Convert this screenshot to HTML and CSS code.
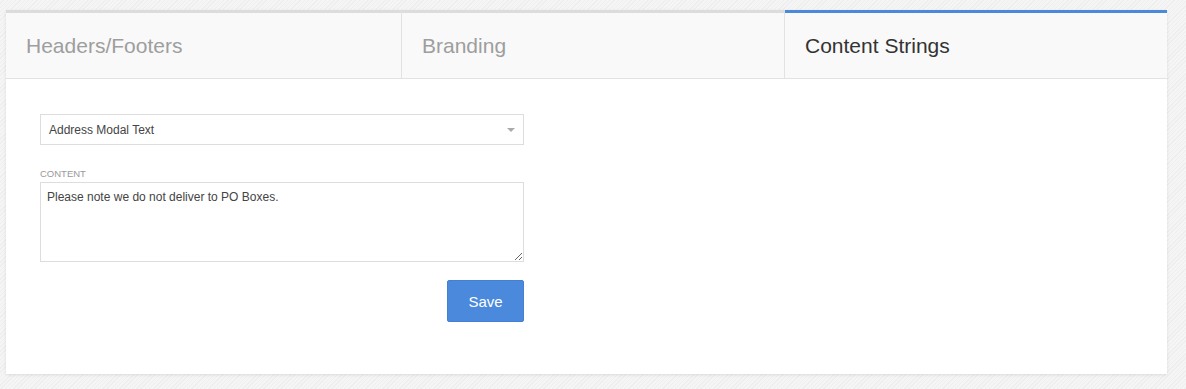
FILE: index.html
```html
<!DOCTYPE html>
<html lang="en">
<head>
  <meta charset="UTF-8">
  <title>Content Strings</title>
  <link rel="stylesheet" href="styles.css">
</head>
<body>
  <div class="panel">
    <div class="tabs">
      <div class="tab">Headers/Footers</div>
      <div class="tab">Branding</div>
      <div class="tab active">Content Strings</div>
    </div>
    <div class="body">
      <form class="form">
        <div class="select">
          <span>Address Modal Text</span>
          <i class="caret"></i>
        </div>
        <label class="label" for="content">Content</label>
        <textarea id="content" class="content">Please note we do not deliver to PO Boxes.</textarea>
        <p class="actions">
          <button type="button" class="save">Save</button>
        </p>
      </form>
    </div>
  </div>
</body>
</html>
```

FILE: styles.css
```css
html, body {
  margin: 0;
  padding: 0;
}
body {
  font-family: "Liberation Sans", Arial, sans-serif;
  background-color: #f3f3f3;
  background-image: repeating-linear-gradient(135deg, #f5f5f5 0, #f5f5f5 2px, #eeeeee 2px, #eeeeee 3px);
  height: 389px;
  padding-top: 10px;
  box-sizing: border-box;
}
div.panel {
  width: 1161px;
  margin-left: 6px;
  background-color: #fff;
  box-shadow: 0 1px 3px rgba(0, 0, 0, .1);
}
div.tabs {
  display: grid;
  grid-template-columns: 396px 383px 1fr;
  border-bottom: 1px solid #e2e2e2;
}
div.tab {
  height: 65px;
  line-height: 65px;
  padding-left: 20px;
  font-size: 21px;
  color: #9e9e9e;
  background-color: #f9f9f9;
  border-top: 3px solid #dcdcdc;
  border-right: 1px solid #e2e2e2;
}
div.tab:last-child {
  border-right: none;
}
div.tab.active {
  color: #333;
  border-top-color: #4a89dc;
}
div.body {
  padding: 35px 34px 52px;
}
form.form {
  width: 484px;
  display: flex;
  flex-direction: column;
}
div.select {
  height: 29px;
  border: 1px solid #ddd;
  display: flex;
  align-items: center;
  justify-content: space-between;
  padding: 0 8px;
  font-size: 12px;
  color: #444;
}
i.caret {
  width: 0;
  height: 0;
  border-left: 4px solid transparent;
  border-right: 4px solid transparent;
  border-top: 4px solid #aaa;
}
label.label {
  margin-top: 23px;
  font-size: 9.5px;
  text-transform: uppercase;
  color: #999;
  line-height: 12px;
}
textarea.content {
  margin-top: 2px;
  height: 80px;
  box-sizing: border-box;
  border: 1px solid #ddd;
  padding: 7px 6px;
  font-family: inherit;
  font-size: 12px;
  color: #444;
  resize: vertical;
  outline: none;
}
p.actions {
  margin: 18px 0 0;
  text-align: right;
}
button.save {
  width: 77px;
  height: 42px;
  background-color: #4a89dc;
  border: 1px solid #4480d0;
  border-radius: 2px;
  color: #fff;
  font-family: inherit;
  font-size: 15px;
}
```
